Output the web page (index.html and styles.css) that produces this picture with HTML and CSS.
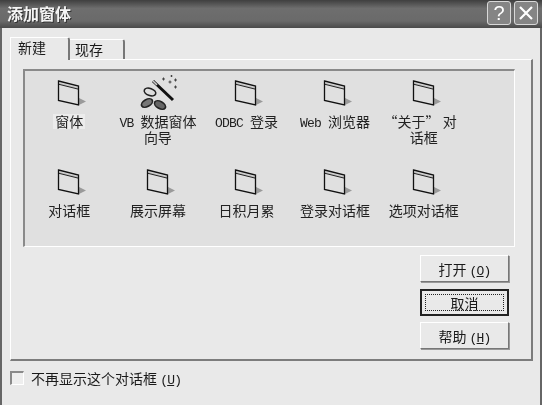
FILE: index.html
```html
<!DOCTYPE html>
<html lang="zh-CN">
<head>
    <meta charset="UTF-8">
    <title>添加窗体</title>
    <link rel="stylesheet" href="styles.css">
</head>
<body>

    <!-- reusable icons -->
    <svg width="0" height="0" class="icon-defs">
        <defs>
            <symbol id="icon-form" viewBox="0 0 32 32" overflow="visible">
                <path d="M26 19 L33 22.5 L26 26 Z" fill="#9a9a9a"/>
                <path d="M5.5 3.5 L25.5 8.5 V10 L5.5 5 Z" fill="#c4c4c4"/>
                <path d="M5.5 5.2 L25.5 10.2" fill="none" stroke="#222" stroke-width="1"/>
                <path d="M5.5 2 L25.5 7 V26 L5.5 21.5 Z" fill="none" stroke="#111" stroke-width="1.300"/>
            </symbol>
        </defs>
    </svg>

    <div class="dialog">
        <div class="titlebar">
            <span class="title">添加窗体</span>
            <div class="title-buttons">
                <span class="title-btn">?</span>
                <span class="title-btn">
                    <svg width="18" height="18" viewBox="0 0 18 18"><path d="M3 3 L15 15 M15 3 L3 15" stroke="#fff" stroke-width="2.2" fill="none"/></svg>
                </span>
            </div>
        </div>

        <div class="content">
            <div class="tabs">
                <div class="tab active">新建</div>
                <div class="tab">现存</div>
            </div>

            <div class="tab-panel">
                <div class="icon-list">
                    <div class="icon-item">
                        <svg class="item-icon"><use href="#icon-form"/></svg>
                        <span class="item-label selected">窗体</span>
                    </div>
                    <div class="icon-item">
                        <svg class="item-icon" viewBox="0 0 32 32">
                            <path d="M11 2 L31 21" stroke="#111" stroke-width="3" fill="none"/>
                            <path d="M11 2 L15 5.800" stroke="#ccc" stroke-width="1.600" fill="none"/>
                            <path d="M20 0 h3 M21.500 -1.500 v3 M28.500 -3 h2 M29.500 -4 v2 M26.500 3 h3 M28 1.500 v3 M32 1 h3 M33.500 -.5 v3 M32 8 h3 M33.500 6.500 v3" stroke="#444" stroke-width="1" fill="none"/>
                            <ellipse cx="8" cy="13" rx="6" ry="3.500" transform="rotate(20 8 13)" fill="#ddd" stroke="#222" stroke-width="1.600"/>
                            <ellipse cx="5" cy="24" rx="6" ry="3.500" transform="rotate(-30 5 24)" fill="#777" stroke="#222" stroke-width="1.600"/>
                            <ellipse cx="18" cy="26" rx="6" ry="3.500" transform="rotate(30 18 26)" fill="#666" stroke="#222" stroke-width="1.600"/>
                        </svg>
                        <span class="item-label"><span class="lat">VB&nbsp;</span>数据窗体<br>向导</span>
                    </div>
                    <div class="icon-item">
                        <svg class="item-icon"><use href="#icon-form"/></svg>
                        <span class="item-label"><span class="lat">ODBC&nbsp;</span>登录</span>
                    </div>
                    <div class="icon-item">
                        <svg class="item-icon"><use href="#icon-form"/></svg>
                        <span class="item-label"><span class="lat">Web&nbsp;</span>浏览器</span>
                    </div>
                    <div class="icon-item">
                        <svg class="item-icon"><use href="#icon-form"/></svg>
                        <span class="item-label">“关于” 对<span class="lat">&nbsp;</span><br>话框</span>
                    </div>
                    <div class="icon-item">
                        <svg class="item-icon"><use href="#icon-form"/></svg>
                        <span class="item-label">对话框</span>
                    </div>
                    <div class="icon-item">
                        <svg class="item-icon"><use href="#icon-form"/></svg>
                        <span class="item-label">展示屏幕</span>
                    </div>
                    <div class="icon-item">
                        <svg class="item-icon"><use href="#icon-form"/></svg>
                        <span class="item-label">日积月累</span>
                    </div>
                    <div class="icon-item">
                        <svg class="item-icon"><use href="#icon-form"/></svg>
                        <span class="item-label">登录对话框</span>
                    </div>
                    <div class="icon-item">
                        <svg class="item-icon"><use href="#icon-form"/></svg>
                        <span class="item-label">选项对话框</span>
                    </div>
                </div>

                <div class="actions">
                    <button class="btn">打开 <span class="lat">(<u>O</u>)</span></button>
                    <button class="btn default"><span class="focus-rect">取消</span></button>
                    <button class="btn">帮助 <span class="lat">(<u>H</u>)</span></button>
                </div>
            </div>

            <label class="check-row">
                <span class="checkbox"></span>
                <span>不再显示这个对话框 <span class="lat">(<u>U</u>)</span></span>
            </label>
        </div>
    </div>
</body>
</html>
```

FILE: styles.css
```css
:root {
    --face: #e9e9e9;
    --well: #e0e0e0;
    --shadow: #7c7c7c;
    --text: #1a1a1a;
}
* { margin: 0; padding: 0; box-sizing: border-box; }
body {
    font-family: "Noto Sans CJK SC", "Liberation Sans", sans-serif;
    font-size: 14px;
    color: var(--text);
    background-color: var(--face);
    overflow: hidden;
}
.icon-defs { position: absolute; }
.lat {
    font-family: "Liberation Mono", monospace;
    font-size: 13px;
    letter-spacing: -0.8px;
    line-height: 1;
}

/* window */
.dialog {
    width: 542px;
    height: 405px;
    display: flex;
    flex-direction: column;
    background-color: var(--face);
    border-left: 2px solid #666;
    border-right: 2px solid #666;
    filter: blur(0.35px);
}
.titlebar {
    height: 28px;
    margin: 0 -2px;
    padding: 0 4px 2px 7px;
    display: flex;
    align-items: center;
    justify-content: space-between;
    background: linear-gradient(#3f3f3f, #6e6e6e 30%, #6a6a6a 75%, #4a4a4a);
}
.title {
    font-size: 16px;
    font-weight: 700;
    line-height: 26px;
    color: #f4f4f4;
    text-shadow: 1px 1px 0 #333;
}
.title-buttons { display: flex; gap: 3px; }
.title-btn {
    width: 24px;
    height: 24px;
    display: flex;
    align-items: center;
    justify-content: center;
    border: 1px solid #d8d8d8;
    border-radius: 3px;
    background-color: #858585;
    color: #fff;
    font-family: "Liberation Sans", sans-serif;
    font-size: 20px;
    line-height: 1;
}

/* tabs */
.content { flex: 1; padding: 9px 7px 0 8px; display: flex; flex-direction: column; }
.tabs { height: 22px; display: flex; align-items: flex-end; }
.tab {
    height: 20px;
    width: 55px;
    padding-left: 5px;
    line-height: 18px;
    border-top: 1px solid #fff;
    border-right: 2px solid #777;
    border-radius: 0 3px 0 0;
}
.tab.active {
    width: 60px;
    height: 23px;
    margin-bottom: -1px;
    padding-left: 7px;
    line-height: 18px;
    background-color: var(--face);
    border-left: 1px solid #fff;
    position: relative;
}
.tab-panel {
    height: 302px;
    padding: 9px 22px 0 12px;
    border-top: 1px solid #fff;
    border-left: 1px solid #fff;
    border-right: 2px solid var(--shadow);
    border-bottom: 2px solid var(--shadow);
    display: flex;
    flex-direction: column;
}

/* icon well */
.icon-list {
    width: 492px;
    height: 178px;
    margin-right: -4px;
    padding-top: 8px;
    display: grid;
    grid-template-columns: repeat(5, 88.6px);
    grid-auto-rows: 89px;
    background-color: var(--well);
    border-top: 2px solid #8a8a8a;
    border-left: 2px solid #8a8a8a;
    border-right: 1px solid #fff;
    border-bottom: 1px solid #fff;
}
.icon-item { display: flex; flex-direction: column; align-items: center; }
.item-icon { width: 32px; height: 32px; flex: none; overflow: visible; }
.item-label {
    margin-top: 3px;
    padding: 0 2px;
    line-height: 15px;
    text-align: center;
    white-space: nowrap;
    color: #222;
}
.item-label.selected { background-color: #ececec; }

/* buttons */
.actions { margin-top: 8px; display: flex; flex-direction: column; align-items: flex-end; gap: 6px; }
.btn {
    width: 89px;
    height: 27px;
    font-family: inherit;
    font-size: 14px;
    color: var(--text);
    background-color: var(--face);
    border: 1px solid;
    border-color: #fff #777 #777 #fff;
    box-shadow: 1px 1px 0 #999;
}
.btn.default {
    margin-top: 1px;
    padding: 3px;
    border: 2px solid #222;
    box-shadow: none;
}
.focus-rect {
    display: block;
    height: 100%;
    line-height: 17px;
    border: 1px dotted #222;
}

/* footer */
.check-row { margin-top: 7px; display: flex; align-items: center; gap: 7px; }
.checkbox {
    width: 14px;
    height: 14px;
    background-color: #eee;
    border-top: 2px solid #8a8a8a;
    border-left: 2px solid #8a8a8a;
    border-right: 1px solid #fff;
    border-bottom: 1px solid #fff;
}
```
